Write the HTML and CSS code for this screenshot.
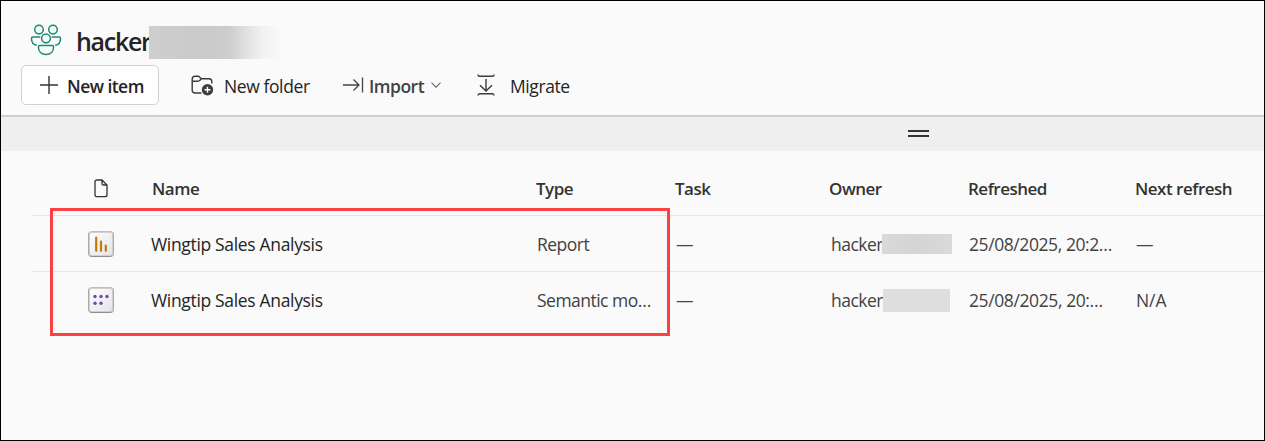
FILE: index.html
```html
<!DOCTYPE html>
<html lang="en">
<head>
<meta charset="utf-8">
<title>Workspace</title>
<link rel="stylesheet" href="styles.css">
</head>
<body>
<div class="frame">
  <header class="header">
    <div class="workspace">
      <svg class="people" width="32" height="32" viewBox="0 0 32 32" fill="none" stroke="#1b8a76" stroke-width="1.5">
        <circle cx="9" cy="5.6" r="4.3"/><circle cx="23" cy="5.6" r="4.3"/><circle cx="16" cy="14.3" r="4.4"/>
        <path d="M10.300 13H2.800Q1.500 13 1.500 14.400C1.500 18 3.600 20.700 6.800 21.200M21.700 13H29.200Q30.500 13 30.500 14.400C30.500 18 28.400 20.700 25.200 21.200"/>
        <path d="M9.800 21.500H22.200Q23.600 21.500 23.600 23C23.600 27.600 20.500 30.500 16 30.500S8.400 27.600 8.400 23Q8.400 21.500 9.800 21.500Z"/>
      </svg>
      <h1 class="title">hacker</h1><span class="mask mask-title"></span>
    </div>
    <nav class="toolbar">
      <button class="tool new-item">
        <svg width="20" height="20" viewBox="0 0 20 20" fill="none" stroke="#333" stroke-width="1.400"><path d="M10 1V19M1 10H19"/></svg>
        <span>New item</span>
      </button>
      <button class="tool new-folder">
        <svg width="23" height="21" viewBox="0 0 23 21" fill="none" stroke="#3b3b3b" stroke-width="1.400">
          <path d="M10.500 18H4Q1.200 18 1.200 15.200V4Q1.200 1.200 4 1.200H6.800Q8 1.200 8.700 2L10.300 3.700H18Q20.800 3.700 20.800 6.500V8.500M1.200 6.200H7Q8 6.200 8.700 5.400L10.300 3.700"/>
          <circle cx="16.500" cy="14.700" r="5.700" fill="#3b3b3b" stroke="none"/><path d="M16.500 11.700V17.700M13.500 14.700H19.500" stroke="#fff"/>
        </svg>
        <span>New folder</span>
      </button>
      <button class="tool import">
        <svg width="21" height="16" viewBox="0 0 21 16" fill="none" stroke="#444" stroke-width="1.300"><path d="M0 8H16M10.500 2.500L16 8L10.500 13.500M19.500 .500V15.500"/></svg>
        <span>Import</span>
        <svg class="chevron" width="10" height="6" viewBox="0 0 10 6" fill="none" stroke="#666" stroke-width="1.100"><path d="M.500 .700L5 5.200L9.500 .700"/></svg>
      </button>
      <button class="tool migrate">
        <svg width="18" height="22" viewBox="0 0 18 22" fill="none" stroke="#3b3b3b" stroke-width="1.400"><path d="M1 .500Q1 2.300 2.500 2.300H15.500Q17 2.300 17 .500M1 21.500Q1 19.700 2.500 19.700H15.500Q17 19.700 17 21.500M9 5V17M3 11.200L9 17L15 11.200"/></svg>
        <span>Migrate</span>
      </button>
    </nav>
  </header>
  <div class="splitter"><span class="grip"></span></div>
  <main class="list">
    <div class="row head">
      <span class="icon"><svg width="14" height="19" viewBox="0 0 14 19" fill="none" stroke="#333" stroke-width="1.300"><path d="M3 1H8L13 6V15.700Q13 17.700 11 17.700H3Q1 17.700 1 15.700V3Q1 1 3 1ZM8 1V4.500Q8 6 9.500 6H13"/></svg></span>
      <span class="h-name">Name</span><span>Type</span><span>Task</span><span>Owner</span><span>Refreshed</span><span class="h-next">Next refresh</span>
    </div>
    <div class="row">
      <span class="icon"><span class="tile"><svg width="24" height="24" viewBox="0 0 24 24" stroke="#c07c0b" stroke-width="2.200" stroke-linecap="round"><path d="M7.200 5.500V18.800M12 9.500V18.800M16.800 13.500V18.800"/></svg></span></span>
      <span class="name">Wingtip Sales Analysis</span><span class="type">Report</span><span class="dash">—</span>
      <span class="owner"><span>hacker</span><i class="mask mask-one"></i></span><span class="date">25/08/2025, 20:2…</span><span class="next">—</span>
    </div>
    <div class="row last">
      <span class="icon"><span class="tile"><svg width="24" height="24" viewBox="0 0 24 24" fill="#6f48b5"><circle cx="6" cy="8.500" r="1.700"/><circle cx="12" cy="8.500" r="1.700"/><circle cx="18" cy="8.500" r="1.700"/><circle cx="6" cy="15.300" r="1.700"/><circle cx="12" cy="15.300" r="1.700"/></svg></span></span>
      <span class="name">Wingtip Sales Analysis</span><span class="type">Semantic mo…</span><span class="dash">—</span>
      <span class="owner"><span>hacker</span><i class="mask mask-two"></i></span><span class="date date-short">25/08/2025, 20:…</span><span class="next">N/A</span>
    </div>
    <div class="highlight"></div>
  </main>
</div>
</body>
</html>
```
FILE: styles.css
```css
* { box-sizing: border-box; }
body { margin: 0; font-family: "Open Sans", "Noto Sans", sans-serif; font-size: 17.5px; color: #242424; }
.frame { height: 441px; border: 1px solid #000; background: #fafafa; overflow: hidden; display: flex; flex-direction: column; }
.header { height: 116px; border-bottom: 2px solid #cfcfcf; padding: 22px 20px 0; flex: none; }
.workspace { display: flex; height: 42px; padding-left: 9px; }
.people { margin-top: 1px; }
.title { margin: 0 0 0 14px; width: 73px; font-size: 25px; line-height: 36px; font-weight: 600; letter-spacing: -1.3px; white-space: nowrap; }
.mask { display: block; flex: none; }
.mask-title { width: 134px; height: 33px; margin-top: 3px; background: linear-gradient(90deg, #cecece 0, #cacaca 40%, #cdcdcd 60%, #e0e0e0 72%, #f2f2f2 85%, #fafafa 100%); }
.toolbar { display: flex; height: 40px; }
.tool { border: 0; background: none; padding: 0; font: inherit; color: inherit; display: flex; align-items: center; height: 40px; white-space: nowrap; text-align: left; letter-spacing: -0.4px; }
.tool svg { flex: none; }
.tool span { padding-top: 1px; }
.new-item { width: 138px; padding-left: 17px; gap: 8px; border: 1px solid #d1d1d1; border-radius: 5px; background: #fff; font-weight: 600; letter-spacing: -0.55px; }
.new-folder { margin-left: 32px; width: 152px; gap: 10px; }
.import { width: 134px; gap: 5px; font-weight: 600; color: #424242; letter-spacing: -0.5px; }
.import .chevron { margin-left: 2px; }
.migrate { gap: 15px; }
.splitter { flex: none; height: 34px; background: #efefef; padding: 13px 0 0 907px; }
.grip { display: block; width: 21px; height: 7px; border: solid #333; border-width: 2px 0; }
.list { position: relative; padding-left: 30px; }
.row { display: grid; grid-template-columns: 120px 385px 139px 154px 139px 166px 1fr; height: 56px; line-height: 56px; border-bottom: 1px solid #e6e6e6; color: #424242; white-space: nowrap; letter-spacing: -0.52px; }
.head { height: 65px; line-height: 75px; font-weight: 600; font-size: 17px; letter-spacing: -0.5px; color: #333; }
.h-name, .h-next { padding-left: 1px; }
.last { border: 0; }
.icon { display: flex; align-items: center; padding-left: 57px; }
.head .icon { padding: 0 0 0 63px; height: 75px; }
.tile { width: 26px; height: 26px; border: 1px solid #aaa; border-top-color: #bdbdbd; border-bottom-color: #8e8e8e; border-radius: 4px; background: linear-gradient(135deg, #fff, #e4e4e4); box-shadow: inset 0 0 0 1px #d0d0d0; }
.tile svg { display: block; }
.name { color: #242424; letter-spacing: -0.33px; }
.type, .dash { padding-left: 1px; }
.owner { display: flex; align-items: center; padding-left: 2px; }
.owner > span { width: 51px; }
.mask-one { width: 70px; height: 20px; background: linear-gradient(90deg, #d9d9d9, #d4d4d4 50%, #dadada); }
.mask-two { width: 67px; height: 23px; margin-left: 1px; background: #dedede; }
.date { padding-left: 1px; letter-spacing: -0.42px; }
.date-short { letter-spacing: -0.4px; }
.next { padding-left: 2px; letter-spacing: -0.1px; }
.highlight { position: absolute; left: 49px; top: 57px; width: 620px; height: 128px; border: 3px solid #fb4141; }
```
